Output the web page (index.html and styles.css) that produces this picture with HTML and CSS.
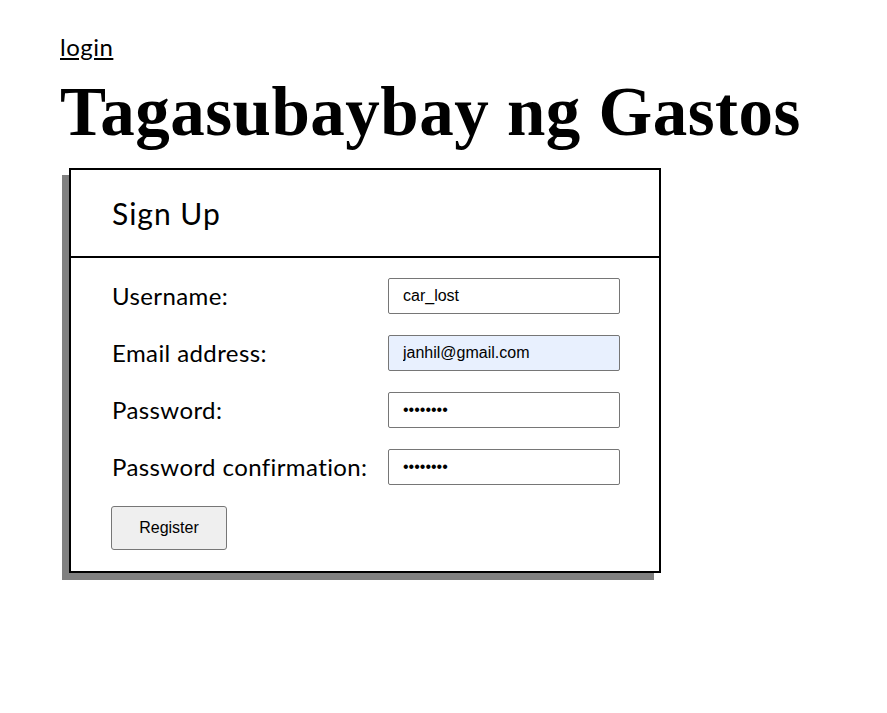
FILE: index.html
```html
<!DOCTYPE html>
<html>
<head>
<meta charset="utf-8">
<link rel="stylesheet" href="styles.css">
</head>
<body>
<div class="page">
  <a class="login" href="#">login</a>
  <h1 class="title">Tagasubaybay ng Gastos</h1>
  <div class="card">
    <div class="card-head">Sign Up</div>
    <form class="card-body">
      <label class="lbl" for="u">Username:</label>
      <input class="inp" id="u" type="text" value="car_lost">
      <label class="lbl" for="e">Email address:</label>
      <input class="inp autofill" id="e" type="text" value="janhil@gmail.com">
      <label class="lbl" for="p1">Password:</label>
      <input class="inp" id="p1" type="password" value="password">
      <label class="lbl" for="p2">Password confirmation:</label>
      <input class="inp" id="p2" type="password" value="password">
      <div class="actions"><button class="btn" type="button">Register</button></div>
    </form>
  </div>
</div>
</body>
</html>
```
FILE: styles.css
```css
html, body {
  margin: 0;
  padding: 0;
  background: #fff;
  color: #000;
}
.page {
  padding: 33px 0 120px 60px;
  font-family: "Lato", "Noto Sans", sans-serif;
}
.login {
  display: inline-block;
  font-size: 24px;
  line-height: 28px;
  letter-spacing: 0.5px;
  color: #000;
  text-decoration: underline;
}
.title {
  margin: 14px 0 19px 0;
  font-family: "Liberation Serif", serif;
  font-weight: 700;
  font-size: 69px;
  line-height: 74px;
  letter-spacing: 0.5px;
}
.card {
  margin-left: 9px;
  width: 588px;
  border: 2px solid #000;
  box-shadow: -7px 7px 0 #808080;
  background: #fff;
}
.card-head {
  height: 86px;
  display: flex;
  align-items: center;
  padding-left: 41px;
  font-size: 30px;
  letter-spacing: 1px;
  border-bottom: 2px solid #000;
}
.card-body {
  display: grid;
  grid-template-columns: 276px 232px;
  row-gap: 21px;
  padding: 20px 0 21px 41px;
  align-items: center;
}
.lbl {
  font-size: 24px;
  letter-spacing: 0.4px;
  position: relative;
  top: -1px;
}
.inp {
  box-sizing: border-box;
  width: 232px;
  height: 36px;
  border: 1px solid #767676;
  border-radius: 2px;
  padding: 0 14px;
  font-family: "Liberation Sans", Arial, sans-serif;
  font-size: 16px;
  color: #000;
  background: #fff;
}
.inp.autofill {
  background: #e8f0fe;
}
.actions {
  grid-column: 1 / 3;
  margin-left: -1px;
}
.btn {
  width: 116px;
  height: 44px;
  background: #efefef;
  border: 1px solid #767676;
  border-radius: 3px;
  font-family: "Liberation Sans", Arial, sans-serif;
  font-size: 16px;
  color: #000;
}
```
